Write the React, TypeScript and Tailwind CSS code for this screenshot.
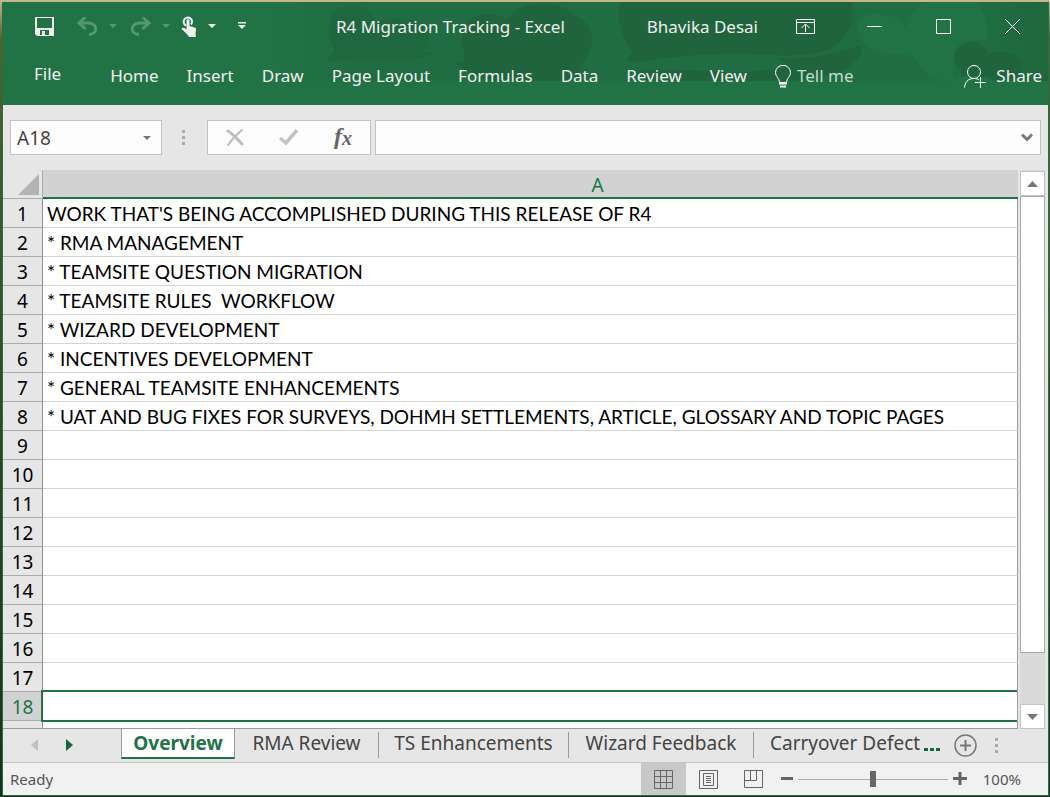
import React from "react";

const ROWS = [
  "WORK THAT'S BEING ACCOMPLISHED DURING THIS RELEASE OF R4",
  "* RMA MANAGEMENT",
  "* TEAMSITE QUESTION MIGRATION",
  "* TEAMSITE RULES  WORKFLOW",
  "* WIZARD DEVELOPMENT",
  "* INCENTIVES DEVELOPMENT",
  "* GENERAL TEAMSITE ENHANCEMENTS",
  "* UAT AND BUG FIXES FOR SURVEYS, DOHMH SETTLEMENTS, ARTICLE, GLOSSARY AND TOPIC PAGES",
  "", "", "", "", "", "", "", "", "", "",
];
const SELECTED = 18;

const MENU = ["Home", "Insert", "Draw", "Page Layout", "Formulas", "Data", "Review", "View"];

function Caret({ className }: { className: string }) {
  return (
    <svg width="8" height="4" viewBox="0 0 8 4" className={className} aria-hidden="true">
      <path d="M0 0h8L4 4z" fill="currentColor" />
    </svg>
  );
}

function HeaderArt() {
  return (
    <svg
      className="pointer-events-none absolute top-0 right-0"
      width="780"
      height="79"
      viewBox="268 2 780 79"
      aria-hidden="true"
    >
      <defs>
        <linearGradient id="shade" x1="0" x2="1" y1="0" y2="0">
          <stop offset="0" stopColor="#206c43" stopOpacity="0" />
          <stop offset="0.12" stopColor="#206c43" stopOpacity="1" />
          <stop offset="0.8" stopColor="#206c43" stopOpacity="1" />
          <stop offset="0.9" stopColor="#206e44" stopOpacity="1" />
          <stop offset="1" stopColor="#1f673f" stopOpacity="1" />
        </linearGradient>
      </defs>
      <rect x="268" y="2" width="780" height="79" fill="url(#shade)" />
      <path
        fill="#1f673f"
        d="M328 61c1-6 9-8 5-15-8-18-4-40 18-41 16 0 22 10 24 17 16-6 46-4 52 8 4 12-2 18-4 22 6 0 10 0 12 1-20 12-80 4-107 8z"
      />
      <g fill="#1f643c">
        <path d="M455 62c6 3 12 0 9-10-6-20 2-36 20-38 10 0 16 2 24 5 6-10 18-15 34-15 16 0 26 4 32 12 18 4 22 26 14 38-4 10-14 12-6 27h-82c-20-4-36-8-45-19z" />
        <path d="M620 2h232c2 26-6 38-24 48-14 6-30 4-42 6-40-4-84-4-144 5-16 2-18-1-9-8-10-14-16-28-13-51z" />
        <path d="M775 58c32 2 64-4 82-12 12-2 2 20-23 28-20 4-36 6-44 7H650c-24-8-10-14 14-11 36 0 80 6 122-3 2-4-2-6-11-9z" />
        <path d="M957 81c6-6 4-9 0-16-8-12 0-23 14-23 10 0 15 5 17 12 14-5 34-1 34 11 0 8-6 12-8 16z" />
      </g>
      <g fill="#217346">
        <path d="M862 40c-14-18 6-32 22-24 8-2 16 2 22 12 6-20 14-26 26-26h42c16 12 14 32 12 40-18-4-32 2-33 20-1 10 2 16 0 19-14 0-26-4-31-12-4-6-6-8-10-14-20 0-40 0-50-15z" />
        <ellipse cx="973" cy="81" rx="20" ry="5" />
      </g>
    </svg>
  );
}

function TitleBar() {
  return (
    <div className="relative flex h-12 items-center pr-px text-[#f0f0f0]">
      <div className="flex items-center pl-8">
        <button aria-label="Save">
          <svg width="19" height="19" viewBox="0 0 19 19">
            <path fill="#f0f0f0" fillRule="evenodd" d="M0 0h19v19H2l-2-2zM2 1v10h15V1zM5 13v5h2v-4h3v4h4v-5z" />
          </svg>
        </button>
        <button aria-label="Undo" className="ml-[23px] text-[#569673]">
          <svg width="21" height="19" viewBox="0 0 21 19" fill="none" stroke="currentColor" strokeWidth="3">
            <path d="M8.500 0L2 6l6.500 6M2 6h10c9 1 9 11 0 11.500" />
          </svg>
        </button>
        <button aria-label="Undo history" className="ml-[11px] text-[#569673]"><Caret className="" /></button>
        <button aria-label="Redo" className="ml-[13px] text-[#569673]">
          <svg width="21" height="19" viewBox="0 0 21 19" fill="none" stroke="currentColor" strokeWidth="3">
            <path d="M12.500 0L19 6l-6.500 6M19 6H9C0 7 0 17 9 17.500" />
          </svg>
        </button>
        <button aria-label="Redo history" className="ml-[11px] text-[#569673]"><Caret className="" /></button>
        <button aria-label="Touch mode" className="ml-[11px]">
          <svg width="16" height="21" viewBox="0 0 16 21">
            <path d="M5 9.500A4.200 4.200 0 1 1 10 8.500" fill="none" stroke="#f0f0f0" strokeWidth="2" />
            <path
              fill="#f0f0f0"
              d="M5.500 4.500a1.500 1.500 0 0 1 3 0V10l5 1.500c1.200.4 1.700 1 1.500 2.500l-.5 3.500.5 3.500H8c-1-2-4-5-7.500-8 .6-1.800 2.500-1.500 5 .5z"
            />
          </svg>
        </button>
        <button aria-label="Touch mode options" className="ml-[11px]"><Caret className="" /></button>
        <button aria-label="Customize toolbar" className="ml-[22px]">
          <svg width="8" height="8" viewBox="0 0 8 8" fill="currentColor">
            <path d="M0 0h8v1.500H0zM0 3h8L4 7z" />
          </svg>
        </button>
      </div>
      <h1 className="flex-1 truncate pl-2 pt-px text-center text-[17px]">R4 Migration Tracking - Excel</h1>
      <span className="pr-[13px] pt-px text-[17px]">Bhavika Desai</span>
      <button aria-label="Ribbon display options" className="flex w-[69px] justify-center">
        <svg width="19" height="15" viewBox="0 0 19 15" fill="none" stroke="#fff">
          <path d="M.5.500h18v14H.5zM.5 3.500h18M9.500 13V5.500M5.500 9l4-4 4 4" />
        </svg>
      </button>
      <button aria-label="Minimize" className="flex w-[69px] justify-center">
        <svg width="15" height="15" viewBox="0 0 15 15" stroke="#fff"><path d="M0 7.500h15" /></svg>
      </button>
      <button aria-label="Maximize" className="flex w-[69px] justify-center">
        <svg width="15" height="15" viewBox="0 0 15 15" fill="none" stroke="#fff"><path d="M.5.500h14v14H.5z" /></svg>
      </button>
      <button aria-label="Close" className="flex w-[69px] justify-center">
        <svg width="15" height="15" viewBox="0 0 15 15" stroke="#fff"><path d="M0 0l15 15M15 0L0 15" /></svg>
      </button>
    </div>
  );
}

function MenuBar() {
  return (
    <nav className="relative flex h-[55px] items-center pr-[6px] pb-[3px] pl-[31px] text-[17px] text-[#f0f0f0]">
      <button className="mr-[49px] pb-1">File</button>
      <div className="flex items-center gap-7">
        {MENU.map((m) => (
          <button key={m} className="whitespace-nowrap">{m}</button>
        ))}
        <button className="flex items-center gap-[6px] whitespace-nowrap text-[#c5dbce]">
          <svg width="16" height="23" viewBox="0 0 16 23" fill="none" stroke="#fff">
            <path d="M4.500 17.500C4.500 13 .5 12 .5 7.500a7.300 7 0 0 1 15 0c0 4.500-4 5.500-4 10z" />
            <path d="M4 18.500h8M5 21.500h6" strokeWidth="2" />
          </svg>
          Tell me
        </button>
      </div>
      <button className="ml-auto flex items-center gap-[10px]">
        <svg width="22" height="23" viewBox="0 0 22 23" fill="none" stroke="#fff">
          <circle cx="10" cy="7" r="6.500" />
          <path d="M.5 22.500c.5-5 3-9 9.500-9 2.500 0 4 .5 5 1.500M11 17.500h11M16.500 12v11" />
        </svg>
        Share
      </button>
    </nav>
  );
}

function Grip({ className }: { className: string }) {
  return (
    <svg width="3" height="15" viewBox="0 0 3 15" className={className} fill="#ababab" aria-hidden="true">
      <path d="M0 0h3v3H0zM0 6h3v3H0zM0 12h3v3H0z" />
    </svg>
  );
}

function FormulaBar() {
  return (
    <div className="flex h-[65px] items-center pr-[7px] pl-[7px]">
      <div className="flex h-[35px] w-[152px] items-center border border-[#c3c3c3] bg-[#fdfdfd] pr-[10px] pl-[6px]">
        <input aria-label="Name box" defaultValue="A18" className="min-w-0 flex-1 bg-transparent pt-px text-[19px] text-[#444] outline-none" />
        <button aria-label="Name list"><Caret className="text-[#777]" /></button>
      </div>
      <Grip className="mx-5" />
      <div className="ml-[2px] flex h-[35px] w-[164px] items-center border border-[#c3c3c3] bg-[#fdfdfd]">
        <button aria-label="Cancel" className="flex flex-1 justify-center">
          <svg width="18" height="17" viewBox="0 0 18 17" fill="none" stroke="#bdbdbd" strokeLinecap="round">
            <path d="M2 2c4 2 9 8 14 13" strokeWidth="3" />
            <path d="M16 1C11 5 6 10 2 16" strokeWidth="2" />
          </svg>
        </button>
        <button aria-label="Enter" className="flex flex-1 justify-center">
          <svg width="20" height="17" viewBox="0 0 20 17" fill="none" stroke="#c3c3c3" strokeWidth="3.500">
            <path d="M1 9l6 5L18 1" />
          </svg>
        </button>
        <button aria-label="Insert function" className="flex flex-1 items-center justify-center pb-1 font-['Liberation_Serif',serif] text-[#666] italic">
          <span className="text-[24px] leading-none font-bold">f</span>
          <span className="pt-1 text-[20px] leading-none font-bold">x</span>
        </button>
      </div>
      <div className="ml-1 flex h-[35px] flex-1 items-center border border-[#c3c3c3] bg-[#fdfdfd] pr-[7px]">
        <input aria-label="Formula" className="min-w-0 flex-1 bg-transparent px-2 outline-none" />
        <button aria-label="Expand formula bar">
          <svg width="12" height="9" viewBox="0 0 12 9" fill="none" stroke="#777" strokeWidth="3">
            <path d="M1 1.500l5 5 5-5" />
          </svg>
        </button>
      </div>
    </div>
  );
}

function Sheet() {
  return (
    <div className="flex min-h-0 flex-1">
      <div className="min-w-0 flex-1 overflow-hidden border-b border-[#9b9b9b]">
        <table className="w-full table-fixed border-separate border-spacing-0">
          <thead>
            <tr className="h-[29px]">
              <td className="w-10 border-r border-b border-[#ababab] p-0">
                <button aria-label="Select all" className="flex w-full justify-end pr-[3px]">
                  <svg width="21" height="21" viewBox="0 0 21 21"><path d="M21 0v21H0z" fill="#b3b3b3" /></svg>
                </button>
              </td>
              <th scope="col" className="border-b-2 border-[#217346] bg-[#d2d2d2] p-0 pt-[3px] pl-[134px] text-center text-[19px] leading-6 font-normal text-[#217346]">
                A
              </th>
            </tr>
          </thead>
          <tbody>
            {ROWS.map((text, i) => {
              const n = i + 1;
              const sel = n === SELECTED;
              return (
                <tr key={n} className="h-[29px]">
                  <th
                    scope="row"
                    className={
                      sel
                        ? "border-r border-b border-[#ababab] bg-[#d2d2d2] p-0 pt-[2px] text-[19px] leading-[26px] font-normal text-[#217346]"
                        : "border-r border-b border-r-[#8f8f8f] border-b-[#ababab] p-0 pt-[2px] text-[19px] leading-[26px] font-normal text-black"
                    }
                  >
                    {n}
                  </th>
                  <td className="relative border-r border-b border-r-[#9b9b9b] border-b-[#d4d4d4] bg-white p-0 pt-[2px] pl-1 font-['Lato',sans-serif] text-[19px] leading-[26px] whitespace-pre text-black">
                    {text}
                    {sel && <div className="absolute -top-[2px] right-0 -bottom-[2px] -left-[2px] z-10 border-2 border-r-0 border-[#217346]" />}
                  </td>
                </tr>
              );
            })}
            <tr className="h-[29px]">
              <td className="border-r border-[#8f8f8f]" />
              <td className="border-r border-[#9b9b9b] bg-white" />
            </tr>
          </tbody>
        </table>
      </div>
      <div className="mr-[3px] ml-[2px] flex w-[25px] flex-col bg-[#dadada]">
        <button aria-label="Scroll up" className="mt-[1px] flex h-[25px] items-center justify-center border border-[#c3c3c3] bg-white">
          <svg width="11" height="6" viewBox="0 0 11 6"><path d="M0 6h11L5.500 0z" fill="#777" /></svg>
        </button>
        <div className="flex flex-1 flex-col">
          <div className="grow-[9] border border-[#ababab] bg-white" />
          <div className="grow" />
        </div>
        <button aria-label="Scroll down" className="flex h-[25px] items-center justify-center border border-[#c3c3c3] bg-white">
          <svg width="11" height="6" viewBox="0 0 11 6"><path d="M0 0h11L5.500 6z" fill="#777" /></svg>
        </button>
      </div>
    </div>
  );
}

function SheetTabs() {
  return (
    <div className="flex h-[34px] items-start border-b border-[#c3c3c3] text-[19px] text-[#444]">
      <div className="flex h-8 w-[118px] items-center gap-7 pl-[28px]">
        <button aria-label="Previous sheet">
          <svg width="7" height="12" viewBox="0 0 7 12"><path d="M7 0v12L0 6z" fill="#c0c0c0" /></svg>
        </button>
        <button aria-label="Next sheet">
          <svg width="7" height="12" viewBox="0 0 7 12"><path d="M0 0v12l7-6z" fill="#0e6a38" /></svg>
        </button>
      </div>
      <button className="h-[30px] w-[114px] border-x border-b-2 border-x-[#9b9b9b] border-b-[#217346] bg-white font-bold text-[#217346]">
        Overview
      </button>
      <div className="flex min-w-0 flex-1 items-center pt-[3px]">
        <button className="h-[26px] w-36 border-r border-[#9b9b9b] pb-[3px] leading-none whitespace-nowrap">RMA Review</button>
        <button className="h-[26px] w-[190px] border-r border-[#9b9b9b] pb-[3px] leading-none whitespace-nowrap">TS Enhancements</button>
        <button className="h-[26px] w-[185px] border-r border-[#9b9b9b] pb-[3px] leading-none whitespace-nowrap">Wizard Feedback</button>
        <button className="ml-4 h-[26px] min-w-0 flex-1 pb-[3px] text-left leading-none whitespace-nowrap">Carryover Defect</button>
      </div>
      <div className="flex h-8 items-center pr-[50px] pl-1">
        <button aria-label="More sheets" className="pt-2">
          <svg width="16" height="3" viewBox="0 0 16 3" fill="#0e6a38"><path d="M0 0h4v3H0zM6 0h4v3H6zM12 0h4v3h-4z" /></svg>
        </button>
        <button aria-label="New sheet" className="ml-[14px]">
          <svg width="23" height="23" viewBox="0 0 23 23" fill="none" stroke="#777">
            <circle cx="11.500" cy="11.500" r="10.500" strokeWidth="1.500" />
            <path d="M6 11.500h11M11.500 6v11" strokeWidth="2" />
          </svg>
        </button>
        <Grip className="ml-[18px]" />
      </div>
    </div>
  );
}

function StatusBar() {
  return (
    <footer className="flex h-8 items-center bg-[#f1f1f1] pr-[27px] pl-[7px] text-[15px] text-[#555]">
      <span className="flex-1">Ready</span>
      <button aria-label="Normal view" className="flex h-8 w-[45px] items-center justify-center bg-[#c8c8c8]">
        <svg width="19" height="19" viewBox="0 0 19 19" fill="none" stroke="#666">
          <path d="M.5.500h18v18H.5zM6.500 0v19M12.500 0v19M0 6.500h19M0 12.500h19" />
        </svg>
      </button>
      <button aria-label="Page layout view" className="flex w-[45px] justify-center">
        <svg width="19" height="19" viewBox="0 0 19 19" fill="none" stroke="#666">
          <path d="M.5.500h18v18H.5zM4.500 3.500h10v12h-10zM7 6.500h5M7 8.500h5M7 10.500h5M7 12.500h5" />
        </svg>
      </button>
      <button aria-label="Page break view" className="flex w-[45px] justify-center">
        <svg width="19" height="19" viewBox="0 0 19 19" fill="none" stroke="#666">
          <path d="M.5.500h18v17H.5zM6.500 0v10M12.500 0v10.500H0" />
        </svg>
      </button>
      <button aria-label="Zoom out" className="ml-[5px]">
        <svg width="12" height="12" viewBox="0 0 12 12"><path d="M0 5.500h12" stroke="#666" strokeWidth="3" /></svg>
      </button>
      <input
        type="range"
        aria-label="Zoom"
        min="10"
        max="190"
        defaultValue="100"
        className="mx-[5px] h-5 w-[150px] appearance-none bg-transparent [&::-webkit-slider-runnable-track]:h-px [&::-webkit-slider-runnable-track]:bg-[#ababab] [&::-webkit-slider-thumb]:-mt-2 [&::-webkit-slider-thumb]:h-4 [&::-webkit-slider-thumb]:w-[6px] [&::-webkit-slider-thumb]:appearance-none [&::-webkit-slider-thumb]:bg-[#666]"
      />
      <button aria-label="Zoom in">
        <svg width="14" height="14" viewBox="0 0 14 14"><path d="M0 6.500h14M7 0v13" stroke="#666" strokeWidth="3" /></svg>
      </button>
      <button className="ml-4">100%</button>
    </footer>
  );
}

export default function App() {
  return (
    <div className="flex h-screen flex-col overflow-hidden bg-linear-to-b from-[#c9b98a] via-[#55602a] via-5% to-[#14301c] pt-[2px] pr-px pb-px pl-[2px] font-['Noto_Sans',sans-serif]">
      <main className="flex min-h-0 flex-1 flex-col border border-t-0 border-[#217346] bg-[#e6e6e6]">
        <header className="relative bg-[#217346]">
          <HeaderArt />
          <TitleBar />
          <MenuBar />
        </header>
        <FormulaBar />
        <Sheet />
        <SheetTabs />
        <StatusBar />
      </main>
    </div>
  );
}
